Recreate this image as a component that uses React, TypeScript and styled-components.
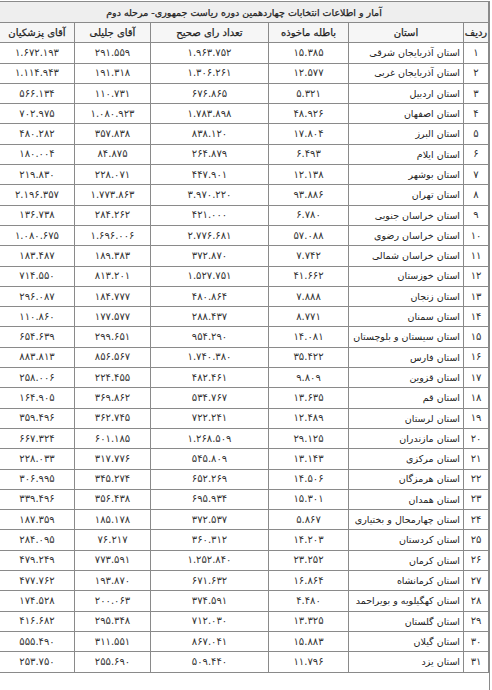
import React from 'react';
import styled, { createGlobalStyle } from 'styled-components';

const GlobalStyle = createGlobalStyle`
  html, body {
    margin: 0;
    padding: 0;
    background: #ffffff;
  }
  body {
    font-family: 'DejaVu Sans', 'Noto Sans', sans-serif;
  }
`;

type Row = [string, string, string, string, string];

// province, void ballots, valid votes, Jalili, Pezeshkian
const rows: Row[] = [
  ['آذربایجان شرقی', '15.385', '1.963.752', '291.559', '1.672.193'],
  ['آذربایجان غربی', '12.577', '1.306.261', '191.318', '1.114.943'],
  ['اردبیل', '5.321', '676.865', '110.731', '566.134'],
  ['اصفهان', '48.926', '1.783.898', '1.080.923', '702.975'],
  ['البرز', '17.804', '838.120', '357.838', '480.282'],
  ['ایلام', '6.493', '264.879', '84.875', '180.004'],
  ['بوشهر', '12.138', '447.901', '228.071', '219.830'],
  ['تهران', '93.886', '3.970.220', '1.773.863', '2.196.357'],
  ['خراسان جنوبی', '6.780', '421.000', '284.262', '136.738'],
  ['خراسان رضوی', '57.088', '2.776.681', '1.696.006', '1.080.675'],
  ['خراسان شمالی', '7.742', '372.870', '189.383', '183.487'],
  ['خوزستان', '41.662', '1.527.751', '813.201', '714.550'],
  ['زنجان', '7.888', '480.864', '184.777', '296.087'],
  ['سمنان', '8.771', '288.437', '177.577', '110.860'],
  ['سیستان و بلوچستان', '14.081', '954.290', '299.651', '654.639'],
  ['فارس', '35.422', '1.740.380', '856.567', '883.813'],
  ['قزوین', '9.809', '482.461', '224.455', '258.006'],
  ['قم', '13.635', '534.767', '369.862', '164.905'],
  ['لرستان', '12.489', '722.241', '362.745', '359.496'],
  ['مازندران', '29.125', '1.268.509', '601.185', '667.324'],
  ['مرکزی', '13.143', '545.809', '317.776', '228.033'],
  ['هرمزگان', '14.506', '652.269', '345.274', '306.995'],
  ['همدان', '15.301', '695.934', '356.438', '339.496'],
  ['چهارمحال و بختیاری', '5.867', '372.537', '185.178', '187.359'],
  ['کردستان', '14.203', '360.312', '76.217', '284.095'],
  ['کرمان', '23.252', '1.252.840', '773.591', '479.249'],
  ['کرمانشاه', '16.864', '671.632', '193.870', '477.762'],
  ['کهگیلویه و بویراحمد', '4.480', '374.591', '200.063', '174.528'],
  ['گلستان', '13.325', '712.030', '295.348', '416.682'],
  ['گیلان', '15.883', '867.041', '311.551', '555.490'],
  ['یزد', '11.796', '509.440', '255.690', '253.750'],
];

const faDigits = '۰۱۲۳۴۵۶۷۸۹';
const fa = (s: string | number) =>
  String(s).replace(/[0-9]/g, (d) => faDigits[Number(d)]);

const Page = styled.div`
  padding: 1px 2px 0 1px;
  direction: rtl;
`;

const Frame = styled.div`
  border-right: 1px solid #8a8a8a;
`;

const Table = styled.table`
  width: 489px;
  border-collapse: collapse;
  table-layout: fixed;
  color: #333333;
  font-size: 10px;
`;

const TitleCell = styled.th`
  height: 20px;
  padding: 0 6px;
  background: #eeeeee;
  border: 1px solid #8a8a8a;
  text-align: center;
  font-weight: normal;
  font-size: 9.5px;
  color: #1f1f1f;
  -webkit-text-stroke: 0.25px #1f1f1f;
  white-space: nowrap;
`;

const HeadCell = styled.th`
  height: 19.3px;
  padding: 0;
  background: #f6f6f6;
  border: 1px solid #8a8a8a;
  font-weight: normal;
  font-size: 10px;
  color: #1f1f1f;
  -webkit-text-stroke: 0.25px #1f1f1f;
  text-align: center;
  white-space: nowrap;
`;

const Cell = styled.td<{ $name?: boolean }>`
  height: 19.3px;
  padding: 0 ${(p) => (p.$name ? '3px' : '0')};
  border: 1px solid #8a8a8a;
  text-align: ${(p) => (p.$name ? 'right' : 'center')};
  font-size: ${(p) => (p.$name ? '9.5px' : '10px')};
  color: ${(p) => (p.$name ? '#222222' : '#333333')};
  white-space: nowrap;
  overflow: hidden;
  line-height: 1;
`;

const Filler = styled.div`
  height: 20px;
`;

const headers = [
  'ردیف',
  'استان',
  'باطله ماخوذه',
  'تعداد رای صحیح',
  'آقای جلیلی',
  'آقای پزشکیان',
];

const widths = [25, 115, 80, 118, 76, 75];

export default function App() {
  return (
    <Page>
      <GlobalStyle />
      <Frame>
        <Table>
          <colgroup>
            {widths.map((w, i) => (
              <col key={i} style={{ width: w }} />
            ))}
          </colgroup>
          <thead>
            <tr>
              <TitleCell colSpan={6}>
                آمار و اطلاعات انتخابات چهاردهمین دوره ریاست جمهوری- مرحله دوم
              </TitleCell>
            </tr>
            <tr>
              {headers.map((h) => (
                <HeadCell key={h}>{h}</HeadCell>
              ))}
            </tr>
          </thead>
          <tbody>
            {rows.map(([province, ...nums], i) => (
              <tr key={province}>
                <Cell>{fa(i + 1)}</Cell>
                <Cell $name>استان {province}</Cell>
                {nums.map((n, j) => (
                  <Cell key={j}>{fa(n)}</Cell>
                ))}
              </tr>
            ))}
          </tbody>
        </Table>
        <Filler />
      </Frame>
    </Page>
  );
}
